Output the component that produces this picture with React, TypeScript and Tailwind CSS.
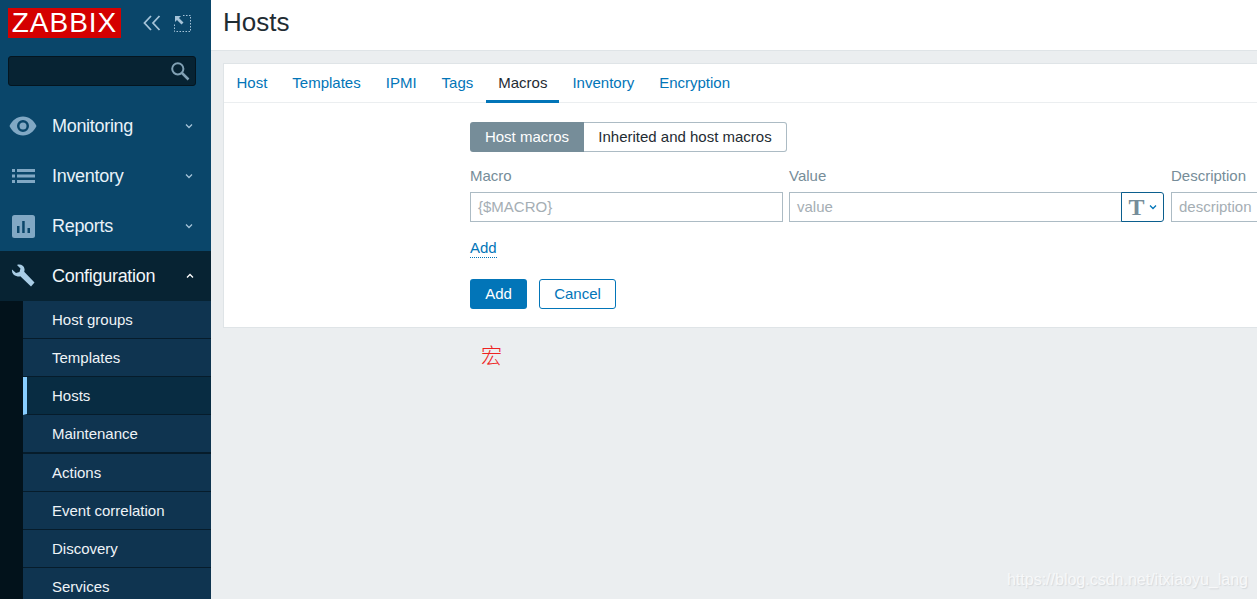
import React from "react";

const Chevron = ({ up = false, className = "" }: { up?: boolean; className?: string }) => (
  <svg width="8" height="6" viewBox="0 0 8 6" className={className} fill="none" stroke="currentColor" strokeWidth="1.3">
    <path d={up ? "M1 4.5 L4 1.5 L7 4.5" : "M1 1.5 L4 4.5 L7 1.5"} />
  </svg>
);

const Eye = () => (
  <svg width="28" height="20" viewBox="0 0 28 20" fill="#81a8c4">
    <path fillRule="evenodd" d="M14 .5C8 .5 3 4.5.5 10 3 15.5 8 19.5 14 19.5S25 15.500 27.500 10C25 4.500 20 .5 14 .5ZM14 4a6 6 0 1 1 0 12 6 6 0 0 1 0-12Zm0 2.500a3.500 3.500 0 1 0 0 7 3.500 3.500 0 0 0 0-7Z" />
  </svg>
);

const ListIcon = () => (
  <svg width="23" height="16" viewBox="0 0 23 16" fill="#81a8c4" className="ml-[1px]">
    <rect x="0" y="1" width="3" height="3" />
    <rect x="0" y="6.500" width="3" height="3" />
    <rect x="0" y="12" width="3" height="3" />
    <rect x="5" y="1" width="18" height="3" />
    <rect x="5" y="6.500" width="18" height="3" />
    <rect x="5" y="12" width="18" height="3" />
  </svg>
);

const Bars = () => (
  <svg width="23" height="23" viewBox="0 0 23 23">
    <rect width="23" height="23" rx="2.500" fill="#81a8c4" />
    <rect x="5" y="11" width="2.500" height="7" fill="#0a466a" />
    <rect x="10.200" y="6" width="2.500" height="12" fill="#0a466a" />
    <rect x="15.500" y="13" width="2.500" height="5" fill="#0a466a" />
  </svg>
);

const Wrench = () => (
  <svg width="24" height="24" viewBox="0 0 24 24" fill="#a9cde6">
    <path d="M1 5.500 5 9l3.500-1L9.500 4.500 6 1c3.500-1.200 7 .5 7.500 4 .2 1-.1 2-.3 2.700L23.500 18.500 20 22.500 9.300 12.200c-1 .3-2.300.4-3.300.1C2.500 11.500.5 9 1 5.500Z" />
  </svg>
);

const Search = () => (
  <svg width="20" height="20" viewBox="0 0 20 20" fill="none" stroke="#81a1b5">
    <circle cx="7.800" cy="7.800" r="5.600" strokeWidth="2" />
    <path d="M12 12 L18.500 18.500" strokeWidth="2.500" />
  </svg>
);

const topItems = [
  { label: "Monitoring", icon: <Eye /> },
  { label: "Inventory", icon: <ListIcon /> },
  { label: "Reports", icon: <Bars /> },
];

const subItems = [
  { label: "Host groups", h: "h-[38px]" },
  { label: "Templates", h: "h-[38px]" },
  { label: "Hosts", h: "h-[38px]", active: true },
  { label: "Maintenance", h: "h-[39px]", thick: true },
  { label: "Actions", h: "h-[38px]" },
  { label: "Event correlation", h: "h-[38px]" },
  { label: "Discovery", h: "h-[38px]" },
  { label: "Services", h: "h-[38px]" },
];

const tabs = ["Host", "Templates", "IPMI", "Tags", "Macros", "Inventory", "Encryption"];

function Sidebar() {
  return (
    <aside className="w-[211px] shrink-0 h-full bg-[#0a466a] overflow-hidden flex flex-col">
      <div className="flex items-start h-[56px] pl-2 pt-[8px] shrink-0">
        <div className="w-[113px] h-[30px] bg-[#d40000] text-white text-[28px] leading-[30px] tracking-[1px] text-center">ZABBIX</div>
        <svg width="18" height="16" viewBox="0 0 18 16" fill="none" stroke="#a5c3d8" strokeWidth="1.800" className="ml-[22px] mt-[7px]">
          <path d="M8 1 L1.500 8 L8 15 M16.500 1 L10 8 L16.500 15" />
        </svg>
        <svg width="17" height="17" viewBox="0 0 17 17" fill="none" stroke="#a5c3d8" className="ml-[13px] mt-[7px]">
          <path d="M9 .5H16.500V16.500H.5V9" strokeDasharray="1.500 1.500" />
          <path d="M1 1h6L5 3l4.500 4.500-2 2L3 5 1 7Z" fill="#a5c3d8" stroke="none" />
        </svg>
      </div>
      <div className="ml-2 w-[188px] h-[30px] rounded-[3px] bg-[#072333] border border-[#04151f] flex items-center justify-end pr-[5px] shrink-0">
        <Search />
      </div>
      <nav className="mt-[15px] shrink-0">
        {topItems.map((it) => (
          <div key={it.label} className="h-[50px] flex items-center text-[#e8f2f9] relative">
            <div className="w-[52px] flex justify-center pr-[6px] shrink-0">{it.icon}</div>
            <span className="text-[18px] tracking-[-0.3px]">{it.label}</span>
            <Chevron className="ml-auto mr-[18px] text-[#a5c3d8]" />
          </div>
        ))}
        <div className="h-[50px] flex items-center text-[#f2f6f9] bg-[#072333]">
          <div className="w-[52px] flex justify-center pr-[6px] shrink-0"><Wrench /></div>
          <span className="text-[18px] tracking-[-0.3px]">Configuration</span>
          <Chevron up className="ml-auto mr-[17px] text-white" />
        </div>
      </nav>
      <div className="flex-1 bg-[#02121b] pl-[23px]">
        {subItems.map((it) => (
          <div
            key={it.label}
            className={`${it.h} ${it.thick ? "border-b-2" : "border-b"} border-[#061c2b] flex items-center pt-[2px] text-[15px] text-[#eef3f7] ${
              it.active ? "bg-[#082c42] border-l-4 border-l-[#87cdff] pl-[25px]" : "bg-[#0f3450] pl-[29px]"
            }`}
          >
            {it.label}
          </div>
        ))}
      </div>
    </aside>
  );
}

function Main() {
  return (
    <main className="flex-1 min-w-0 h-full bg-[#ebeef0] relative overflow-hidden">
      <header className="h-[51px] bg-white border-b border-[#dfe4e7] flex items-center pl-[12px] pb-[5px]">
        <h1 className="text-[26px] text-[#1f2c33]">Hosts</h1>
      </header>
      <section className="ml-[12px] mt-[12px] -mr-[40px] h-[265px] bg-white border border-[#dfe4e7]">
        <div className="h-[39px] border-b border-[#ebeef0] flex pl-[0.5px]">
          {tabs.map((t) => (
            <div
              key={t}
              className={`h-[39px] px-[12px] mr-[1px] flex items-center text-[15px] ${
                t === "Macros" ? "text-[#1f2c33] border-b-[3px] border-[#0275b8] pt-[3px]" : "text-[#0275b8]"
              }`}
            >
              {t}
            </div>
          ))}
        </div>
        <div className="pl-[246px] pt-[19px]">
          <div className="flex h-[30px] w-[317px] text-[15px]">
            <div className="w-[114px] bg-[#768d99] text-white flex items-center justify-center rounded-l-[3px]">Host macros</div>
            <div className="flex-1 border border-l-0 border-[#acbbc4] rounded-r-[3px] text-[#1f2c33] flex items-center justify-center">Inherited and host macros</div>
          </div>
          <div className="mt-[14px] flex h-[20px] items-center text-[15px] text-[#768d99]">
            <div className="w-[319px]">Macro</div>
            <div className="w-[382px]">Value</div>
            <div>Description</div>
          </div>
          <div className="mt-[6px] flex w-[1100px] h-[30px] text-[15px] text-[#a5aeb4]">
            <div className="w-[313px] border border-[#acbbc4] flex items-center pl-[7px]">{"{$MACRO}"}</div>
            <div className="ml-[6px] w-[333px] border border-[#acbbc4] flex items-center pl-[7px]">value</div>
            <div className="w-[43px] -ml-px border border-[#0b5e8e] rounded-r-[3px] flex items-center justify-center gap-[4px]">
              <span className="font-['Liberation_Serif',serif] font-bold text-[24px] leading-none text-[#768d99]">T</span>
              <Chevron className="text-[#0275b8]" />
            </div>
            <div className="ml-[7px] w-[200px] border border-[#acbbc4] flex items-center pl-[7px]">description</div>
          </div>
          <div className="mt-[14px] h-[20px]">
            <span className="text-[15px] text-[#0275b8] border-b border-dotted border-[#0275b8] inline-block leading-[18px]">Add</span>
          </div>
          <div className="mt-[23px] flex gap-[12px] text-[15px]">
            <div className="w-[57px] h-[30px] bg-[#0275b8] text-white rounded-[3px] flex items-center justify-center">Add</div>
            <div className="w-[77px] h-[30px] border border-[#0275b8] text-[#0275b8] rounded-[3px] flex items-center justify-center">Cancel</div>
          </div>
        </div>
      </section>
      <p className="pl-[270px] pt-[13px] text-[21px] leading-[26px] text-[#ee2222] font-['Noto_Sans_CJK_SC',sans-serif] font-light">宏</p>
      <span className="absolute right-[9px] bottom-[9px] text-[16px] leading-[20px] text-[#f7f8f9] [text-shadow:1px_1px_1px_#d5d9dc]">https://blog.csdn.net/itxiaoyu_lang</span>
    </main>
  );
}

export default function App() {
  return (
    <div className="flex w-full h-screen overflow-hidden font-['Liberation_Sans',Arial,sans-serif]">
      <Sidebar />
      <Main />
    </div>
  );
}
